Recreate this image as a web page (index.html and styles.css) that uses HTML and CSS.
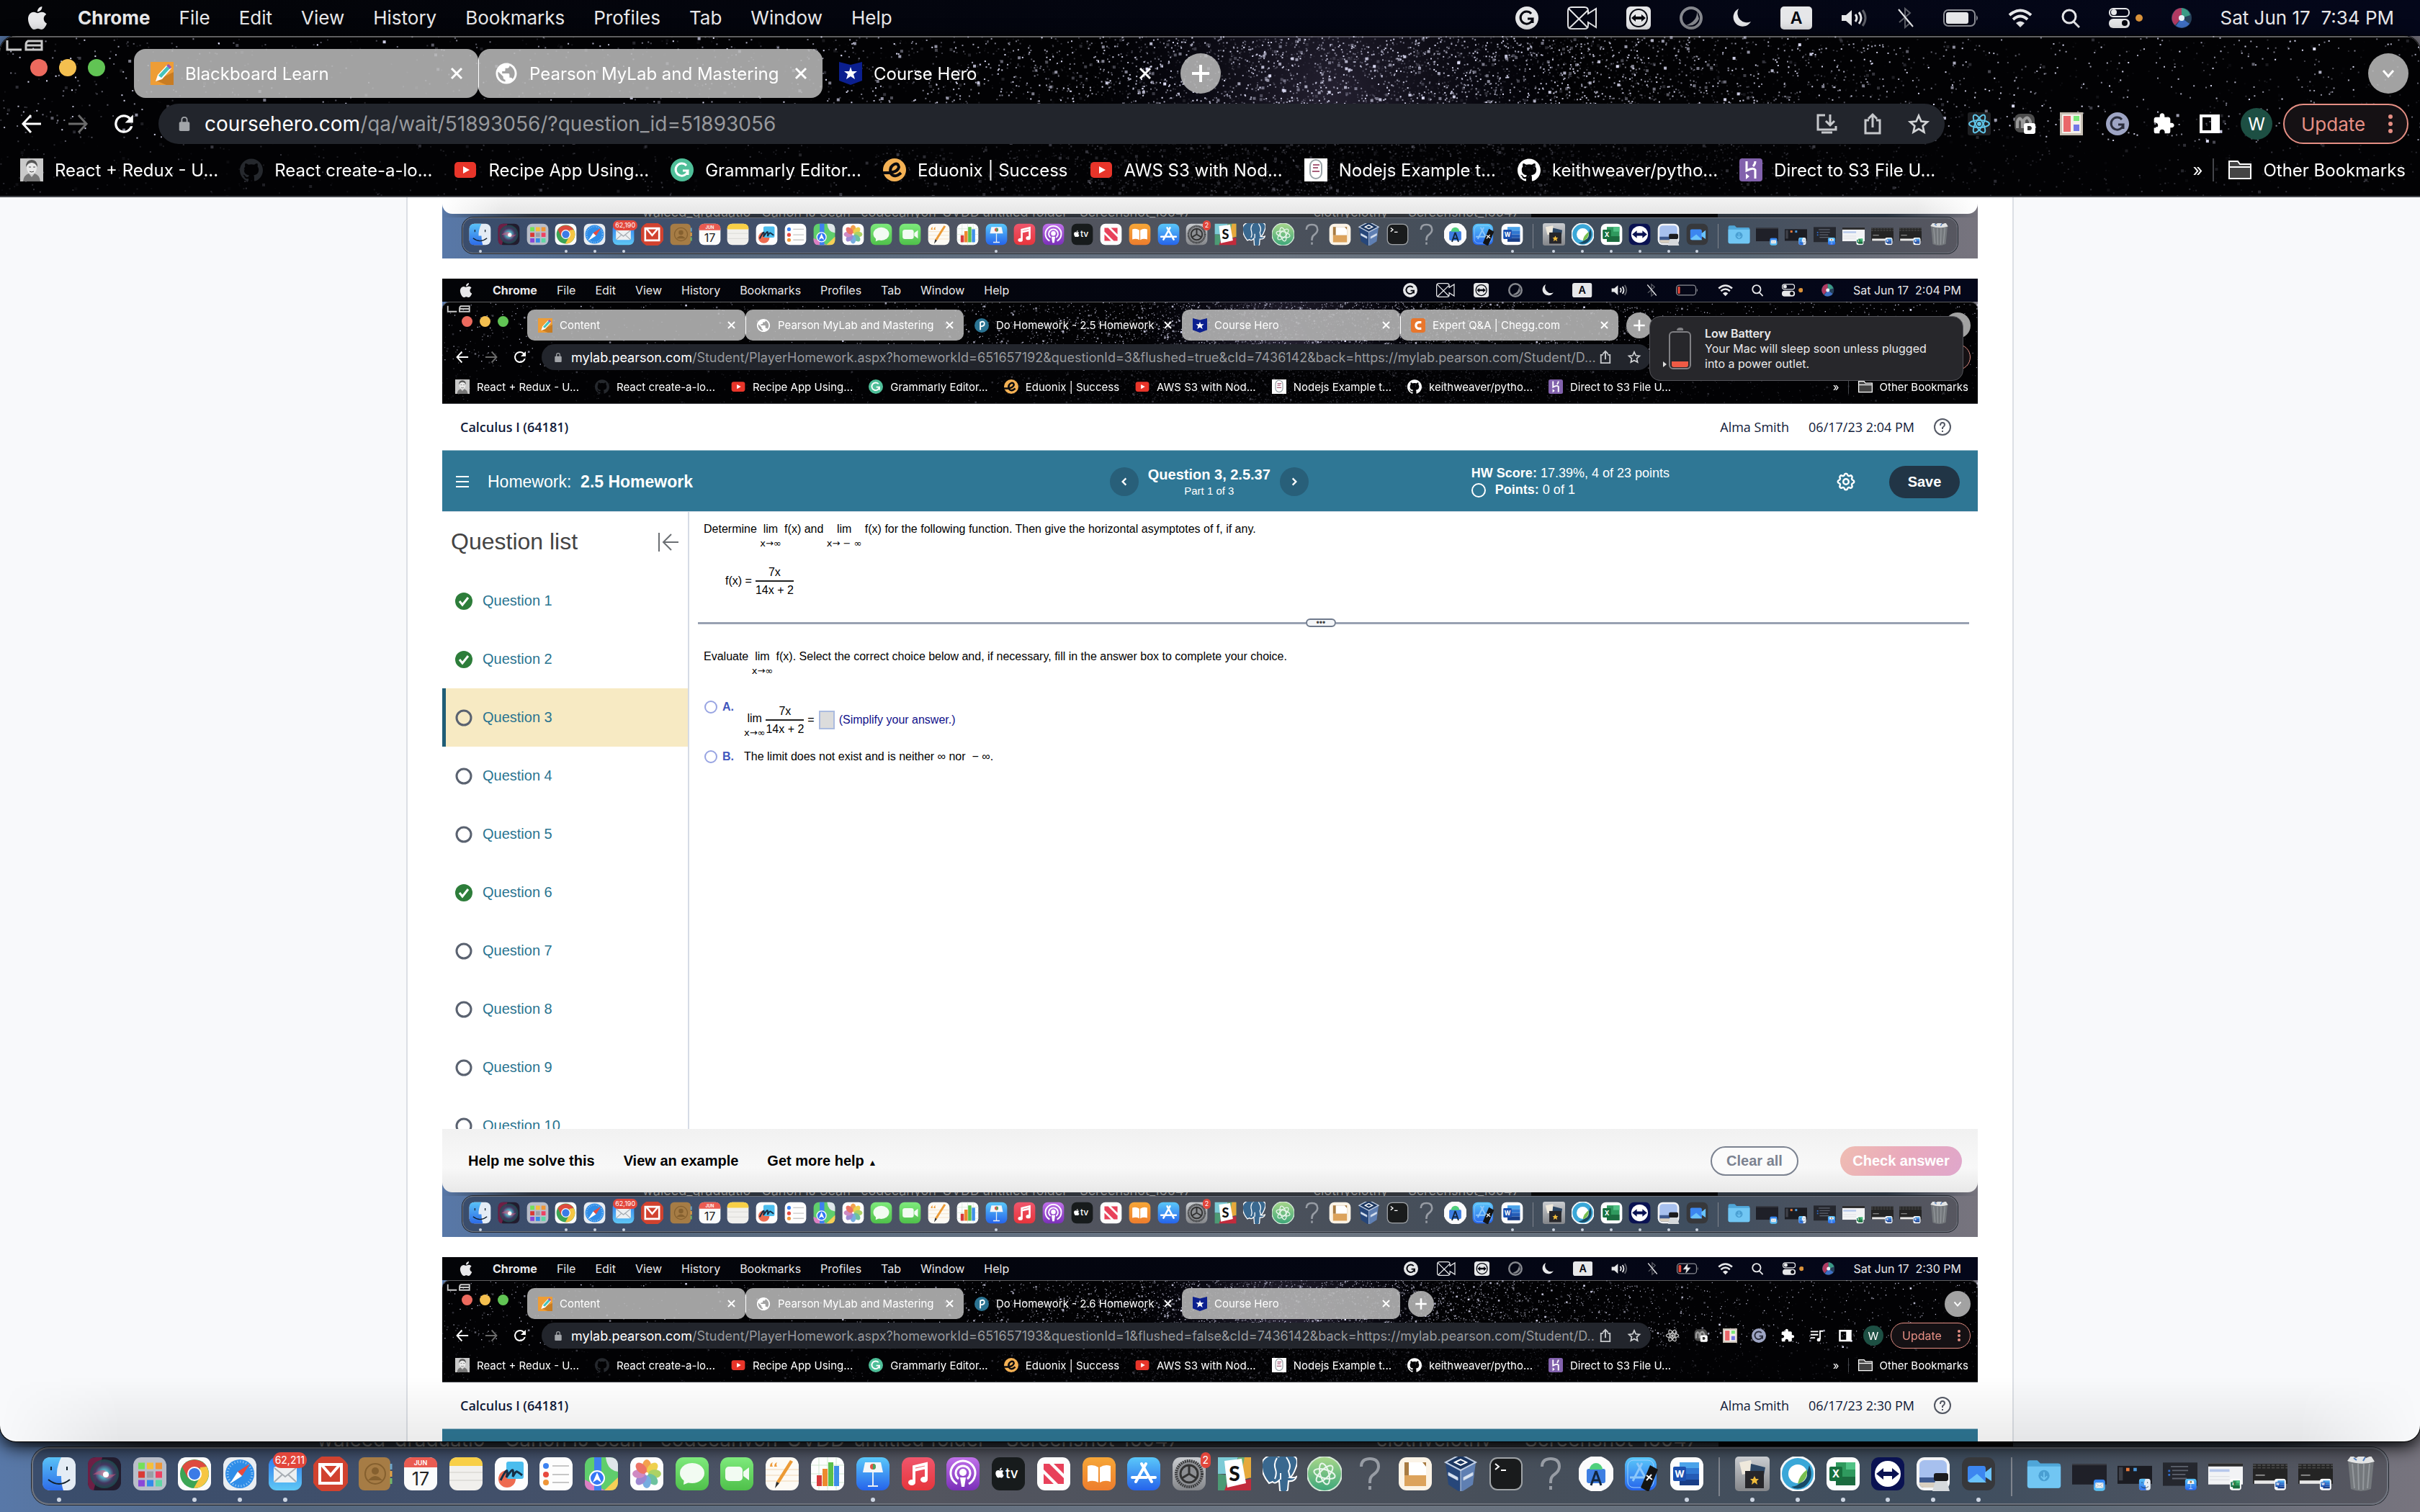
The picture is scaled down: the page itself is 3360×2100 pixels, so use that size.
FILE: index.html
```html
<!DOCTYPE html>
<html lang="en">
  <head>
    <meta charset="UTF-8" />
    <meta name="viewport" content="width=device-width, initial-scale=1.0" />
    <title>Course Hero</title>
    <link rel="stylesheet" href="styles.css" />
  </head>
  <body>
    <!-- Icon sprite -->
    <svg class="sprite" aria-hidden="true">
      <defs>
        <linearGradient id="g-blue" x1="0" y1="0" x2="0" y2="1"><stop offset="0" stop-color="#5ac8fa" /><stop offset="1" stop-color="#2563eb" /></linearGradient>
        <linearGradient id="g-mail" x1="0" y1="0" x2="0" y2="1"><stop offset="0" stop-color="#2f7cf0" /><stop offset="1" stop-color="#5fc8f5" /></linearGradient>
        <linearGradient id="g-green" x1="0" y1="0" x2="0" y2="1"><stop offset="0" stop-color="#7eea7c" /><stop offset="1" stop-color="#4fc04a" /></linearGradient>
        <linearGradient id="g-red" x1="0" y1="0" x2="0" y2="1"><stop offset="0" stop-color="#f0566c" /><stop offset="1" stop-color="#e6353c" /></linearGradient>
        <linearGradient id="g-purple" x1="0" y1="0" x2="0" y2="1"><stop offset="0" stop-color="#c071ea" /><stop offset="1" stop-color="#7a2fb8" /></linearGradient>
        <linearGradient id="g-orange" x1="0" y1="0" x2="0" y2="1"><stop offset="0" stop-color="#f6a637" /><stop offset="1" stop-color="#ee7d2d" /></linearGradient>
        <linearGradient id="g-grey" x1="0" y1="0" x2="0" y2="1"><stop offset="0" stop-color="#c9ccd0" /><stop offset="1" stop-color="#84868a" /></linearGradient>
        <linearGradient id="g-atom" x1="0" y1="0" x2="0" y2="1"><stop offset="0" stop-color="#a6d68a" /><stop offset="1" stop-color="#3fa77a" /></linearGradient>
        <linearGradient id="g-face" x1="0" y1="0" x2="0" y2="1"><stop offset="0" stop-color="#59c2f7" /><stop offset="1" stop-color="#2d6be8" /></linearGradient>
        <radialGradient id="g-siri"><stop offset="0" stop-color="#ffffff" /><stop offset=".3" stop-color="#5bc3d8" /><stop offset=".65" stop-color="#4a3a68" /><stop offset="1" stop-color="#1b4f50" /></radialGradient>
      </defs>

      <!-- menu bar -->
      <symbol id="apple" viewBox="0 0 24 24"><path fill="currentColor" d="M12.152 6.896c-.948 0-2.415-1.078-3.96-1.04-2.04.027-3.91 1.183-4.961 3.014-2.117 3.675-.546 9.103 1.519 12.09 1.013 1.454 2.208 3.09 3.792 3.039 1.52-.065 2.09-.987 3.935-.987 1.831 0 2.35.987 3.96.948 1.637-.026 2.676-1.48 3.676-2.948 1.156-1.688 1.636-3.325 1.662-3.415-.039-.013-3.182-1.221-3.22-4.857-.026-3.04 2.48-4.494 2.597-4.559-1.429-2.09-3.623-2.324-4.39-2.376-2-.156-3.675 1.09-4.61 1.09zM15.53 3.83c.843-1.012 1.4-2.427 1.245-3.83-1.207.052-2.662.805-3.532 1.818-.78.896-1.454 2.338-1.273 3.714 1.338.104 2.715-.688 3.559-1.701" /></symbol>
      <symbol id="st-grammarly" viewBox="0 0 32 32"><circle cx="16" cy="16" r="16" fill="#e6e7e9" /><path d="M22 10a8.500 8.500 0 1 0 2 7h-7M24 17v6" fill="none" stroke="#05070f" stroke-width="3" /></symbol>
      <symbol id="st-camera" viewBox="0 0 42 32"><path d="M6 1h18q5 0 5 5v4l11-7v26l-11-7v4q0 5-5 5H6q-5 0-5-5V6q0-5 5-5zM2 3l27 27M29 5L3 30" fill="none" stroke="#e6e7e9" stroke-width="2" /></symbol>
      <symbol id="st-viewer" viewBox="0 0 34 32"><rect width="34" height="32" rx="6" fill="#e6e7e9" /><circle cx="17" cy="16" r="13" fill="#05070f" /><circle cx="17" cy="16" r="11" fill="#e6e7e9" /><path d="M7 16l6-5v3h8v-3l6 5-6 5v-3h-8v3z" fill="#05070f" /></symbol>
      <symbol id="st-ring" viewBox="0 0 32 32"><circle cx="16" cy="16" r="14" fill="none" stroke="#85878d" stroke-width="4" /><path d="M24 7Q25 20 9 26q13 3 18-9" fill="#85878d" /></symbol>
      <symbol id="st-moon" viewBox="0 0 28 32"><path d="M10 3a13 13 0 1 0 17 18A13 13 0 0 1 10 3z" fill="#e6e7e9" /></symbol>
      <symbol id="st-keyboard" viewBox="0 0 44 32"><rect width="44" height="32" rx="5" fill="#e6e7e9" /><text x="22" y="24" text-anchor="middle" font-family="Inter, sans-serif" font-weight="600" font-size="23" fill="#05070f">A</text></symbol>
      <symbol id="st-volume" viewBox="0 0 38 32"><path d="M1 12h6l8-7v22l-8-7H1z" fill="#e6e7e9" /><path d="M20 11q4 5 0 10M25 8q6 8 0 16" fill="none" stroke="#e6e7e9" stroke-width="3" /><path d="M30 5q8 11 0 22" fill="none" stroke="#5c5e66" stroke-width="3" /></symbol>
      <symbol id="st-bluetooth" viewBox="0 0 24 32"><path d="M3 22L18 9l-7-6v26l7-6-5-4" fill="none" stroke="#5c5e66" stroke-width="2" /><path d="M2 4l20 24" stroke="#e6e7e9" stroke-width="2" /></symbol>
      <symbol id="st-battery" viewBox="0 0 50 32"><rect x="1" y="5" width="43" height="22" rx="6" fill="none" stroke="#8b8d94" stroke-width="2" /><rect x="4" y="8" width="31" height="16" rx="3" fill="#e6e7e9" /><path d="M46 12q4 4 0 8z" fill="#8b8d94" /></symbol>
      <symbol id="st-battery-low" viewBox="0 0 50 32"><rect x="1" y="5" width="43" height="22" rx="6" fill="none" stroke="#8b8d94" stroke-width="2" /><rect x="4" y="8" width="5" height="16" rx="2" fill="#ea4b3c" /><path d="M46 12q4 4 0 8z" fill="#8b8d94" /></symbol>
      <symbol id="st-battery-charging" viewBox="0 0 50 32"><rect x="1" y="5" width="43" height="22" rx="6" fill="none" stroke="#8b8d94" stroke-width="2" /><rect x="4" y="8" width="6" height="16" rx="2" fill="#ea4b3c" /><path d="M46 12q4 4 0 8zM26 2L13 18h8l-3 12 14-17h-8z" fill="#e6e7e9" stroke="#05070f" /></symbol>
      <symbol id="st-wifi" viewBox="0 0 34 32"><path d="M2 12q15-13 30 0M7 18q10-9 20 0" fill="none" stroke="#e6e7e9" stroke-width="4" /><path d="M11 23q6-5 12 0l-6 6z" fill="#e6e7e9" /></symbol>
      <symbol id="st-search" viewBox="0 0 26 32"><circle cx="11" cy="14" r="9" fill="none" stroke="#e6e7e9" stroke-width="3" /><path d="M17 21l8 8" stroke="#e6e7e9" stroke-width="3" /></symbol>
      <symbol id="st-control" viewBox="0 0 47 32"><rect x="1" y="3" width="27" height="11" rx="5" fill="none" stroke="#e6e7e9" stroke-width="2" /><circle cx="7" cy="8" r="4" fill="#e6e7e9" /><rect y="17" width="29" height="13" rx="6" fill="#e6e7e9" /><circle cx="22" cy="23" r="4" fill="#05070f" /><circle cx="42" cy="16" r="5" fill="#d9923a" /></symbol>
      <symbol id="st-siri" viewBox="0 0 28 32"><circle cx="14" cy="16" r="14" fill="#27425c" /><path d="M14 2a14 14 0 0 0-9 24l9-10z" fill="#b03a62" /><path d="M14 2a14 14 0 0 1 12 10l-12 4z" fill="#3b9a86" /><path d="M6 27a14 14 0 0 0 19-3L14 16z" fill="#3f6fc4" /><circle cx="14" cy="16" r="4" fill="#eaf4fa" /></symbol>

      <!-- browser -->
      <symbol id="lb" viewBox="0 0 56 16"><path d="M2 1v13h20M28 8h22M30 2h20v12H28V8q0-6 4-6" fill="none" stroke="#c9c9c9" stroke-width="3" /></symbol>
      <symbol id="close" viewBox="0 0 20 20"><path d="M3 3l14 14M17 3L3 17" stroke="#fff" stroke-width="3" /></symbol>
      <symbol id="plus" viewBox="0 0 28 28"><path d="M14 2v24M2 14h24" stroke="#fff" stroke-width="4" /></symbol>
      <symbol id="chevron" viewBox="0 0 28 28"><path d="M7 10l7 8 7-8" fill="none" stroke="#fff" stroke-width="3" /></symbol>
      <symbol id="back" viewBox="0 0 32 32"><path d="M29 16H4M15 4L4 16l11 12" fill="none" stroke="#fff" stroke-width="3" /></symbol>
      <symbol id="forward" viewBox="0 0 32 32"><path d="M3 16h25M17 4l11 12-11 12" fill="none" stroke="#6b6b6b" stroke-width="3" /></symbol>
      <symbol id="reload" viewBox="2 2 20 20"><path fill="#fff" d="M17.650 6.350A7.960 7.960 0 0 0 12 4a8 8 0 1 0 7.730 10h-2.080A6 6 0 1 1 12 6c1.660 0 3.140.69 4.220 1.780L13 11h7V4z" /></symbol>
      <symbol id="lock" viewBox="0 0 16 22"><path d="M4 9V5q0-4 4-4t4 4v4" fill="none" stroke="#a2a5a9" stroke-width="2" /><rect y="8" width="16" height="14" rx="2" fill="#a2a5a9" /></symbol>
      <symbol id="install" viewBox="0 0 32 32"><path d="M14 4H4v20h25v-5M21 3v15M15 12l6 6 6-6M9 28h15" fill="none" stroke="#c6c8cb" stroke-width="3" /></symbol>
      <symbol id="share" viewBox="0 0 32 32"><path d="M11 11H6v18h20V11h-5M16 21V3M10 9l6-6 6 6" fill="none" stroke="#c6c8cb" stroke-width="3" /></symbol>
      <symbol id="star" viewBox="0 0 24 24"><path d="M12 3.500l2.600 5.900 6.400.6-4.800 4.300 1.400 6.300L12 17.300l-5.600 3.300 1.400-6.300L3 10l6.400-.6z" fill="none" stroke="#d2d4d6" stroke-width="2" /></symbol>
      <symbol id="react" viewBox="0 0 32 32"><rect width="32" height="32" rx="3" fill="#1f2023" /><g fill="none" stroke="#61c5e8" stroke-width="2"><ellipse cx="16" cy="16" rx="14" ry="5" /><ellipse cx="16" cy="16" rx="14" ry="5" transform="rotate(60 16 16)" /><ellipse cx="16" cy="16" rx="14" ry="5" transform="rotate(120 16 16)" /></g><circle cx="16" cy="16" r="3" fill="#61c5e8" /></symbol>
      <symbol id="react-off" viewBox="0 0 32 32"><g fill="none" stroke="#c9c9c9" stroke-width="2"><ellipse cx="16" cy="16" rx="14" ry="5" /><ellipse cx="16" cy="16" rx="14" ry="5" transform="rotate(60 16 16)" /><ellipse cx="16" cy="16" rx="14" ry="5" transform="rotate(120 16 16)" /></g><circle cx="16" cy="16" r="3" fill="#c9c9c9" /></symbol>
      <symbol id="ext-loop" viewBox="0 0 32 32"><rect x="1" y="2" width="28" height="26" rx="8" fill="#4c4c4c" /><path d="M5 22V13q3-9 7 0v9M14 20v-9q5-8 9 2v6" fill="none" stroke="#9b9b9b" stroke-width="4" /><rect x="14" y="15" width="16" height="15" rx="3" fill="#fff" /><path d="M19 19h4q4 3 0 6h-4z" fill="#333" /></symbol>
      <symbol id="ext-layout" viewBox="0 0 32 32"><rect width="32" height="32" fill="#c7bfb4" /><rect x="3" y="3" width="26" height="26" fill="#f4f0ea" /><rect x="5" y="5" width="10" height="22" fill="#e9676a" /><rect x="19" y="5" width="8" height="7" fill="#79e879" /><rect x="19" y="17" width="8" height="9" fill="#7276e6" /></symbol>
      <symbol id="ext-g" viewBox="0 0 32 32"><circle cx="16" cy="16" r="16" fill="#9ea5c4" /><path d="M22 10a8.500 8.500 0 1 0 2 7h-7M24 17v6" fill="none" stroke="#2a2d3c" stroke-width="3" /></symbol>
      <symbol id="puzzle" viewBox="0 0 24 24"><path fill="#fff" d="M20.500 11H19V7c0-1.100-.9-2-2-2h-4V3.500C13 2.120 11.880 1 10.500 1S8 2.120 8 3.500V5H4c-1.100 0-1.990.9-1.990 2v3.800H3.500c1.490 0 2.700 1.210 2.700 2.700s-1.210 2.700-2.700 2.700H2V20c0 1.100.9 2 2 2h3.800v-1.500c0-1.490 1.210-2.700 2.700-2.700s2.700 1.210 2.700 2.700V22H17c1.100 0 2-.9 2-2v-4h1.500c1.380 0 2.500-1.120 2.500-2.500S21.880 11 20.500 11z" /></symbol>
      <symbol id="playlist" viewBox="0 0 32 32"><path d="M3 7h17M3 14h17M3 21h10M24 24V6h7" fill="none" stroke="#fff" stroke-width="3" /><circle cx="21" cy="25" r="4" fill="#fff" /></symbol>
      <symbol id="sidepanel" viewBox="0 0 32 32"><path d="M2 3h28v26H2zM6 7v18h12V7z" fill="#fff" fill-rule="evenodd" /></symbol>

      <!-- favicons -->
      <symbol id="fav-pencil" viewBox="0 0 32 32"><rect width="32" height="32" fill="#ee9d36" /><path d="M8 26l14 6h10V14z" fill="#c87c22" /><path d="M7 27l3-9L23 4l6 5-13 15z" fill="#fff" /><path d="M11 19L23 6l4 3-12 13z" fill="#46c3bb" /><path d="M22 5l3-2 4 4-2 3z" fill="#9356b8" /></symbol>
      <symbol id="fav-globe" viewBox="1 1 22 22"><path fill="#fff" d="M12 2C6.480 2 2 6.480 2 12s4.480 10 10 10 10-4.480 10-10S17.520 2 12 2zm-1 17.930c-3.950-.49-7-3.850-7-7.930 0-.62.08-1.210.21-1.790L9 15v1c0 1.100.9 2 2 2v1.930zm6.900-2.540c-.26-.81-1-1.390-1.900-1.390h-1v-3c0-.55-.45-1-1-1H8v-2h2c.55 0 1-.45 1-1V7h2c1.100 0 2-.9 2-2v-.41c2.930 1.190 5 4.060 5 7.410 0 2.080-.8 3.970-2.100 5.390z" /></symbol>
      <symbol id="fav-hero" viewBox="0 0 32 32"><path d="M0 0l16 4L32 0v26l-16 6-16-6z" fill="#0b1f8f" /><path d="M16 7l2 6h7l-5 4 2 7-6-4-6 4 2-7-5-4h7z" fill="#fff" /></symbol>
      <symbol id="fav-pearson" viewBox="0 0 32 32"><circle cx="16" cy="16" r="16" fill="#2b7392" /><path d="M13 26V9q9-4 9 3 0 6-9 6" fill="none" stroke="#fff" stroke-width="3" /></symbol>
      <symbol id="fav-chegg" viewBox="0 0 32 32"><rect width="32" height="32" rx="6" fill="#e8762c" /><path d="M23 9h-6q-6 1-6 7t6 7h6" fill="none" stroke="#fff" stroke-width="5" /></symbol>
      <symbol id="bm-photo" viewBox="0 0 32 32"><rect width="32" height="32" fill="#c9c9c9" /><path d="M4 32q1-9 8-11l4 5 4-5q7 2 8 11z" fill="#777" /><ellipse cx="16" cy="13" rx="7" ry="9" fill="#e9e9e9" /><path d="M8 12q0-10 8-10t8 10q-3-6-8-6t-8 6z" fill="#555" /><path d="M12 12h3M18 12h3M13 18q3 2 6 0" stroke="#444" stroke-width="1" fill="none" /></symbol>
      <symbol id="bm-github" viewBox="0 0 24 24"><path fill="currentColor" d="M12 .297c-6.630 0-12 5.373-12 12 0 5.303 3.438 9.800 8.205 11.385.6.113.82-.258.82-.577 0-.285-.01-1.040-.015-2.040-3.338.724-4.042-1.610-4.042-1.610C4.422 18.070 3.633 17.700 3.633 17.700c-1.087-.744.084-.729.084-.729 1.205.084 1.838 1.236 1.838 1.236 1.070 1.835 2.809 1.305 3.495.998.108-.776.417-1.305.76-1.605-2.665-.3-5.466-1.332-5.466-5.930 0-1.310.465-2.380 1.235-3.220-.135-.303-.54-1.523.105-3.176 0 0 1.005-.322 3.300 1.230.96-.267 1.980-.399 3-.405 1.020.006 2.040.138 3 .405 2.280-1.552 3.285-1.230 3.285-1.230.645 1.653.24 2.873.12 3.176.765.84 1.230 1.910 1.230 3.220 0 4.610-2.805 5.625-5.475 5.920.42.36.81 1.096.81 2.220 0 1.606-.015 2.896-.015 3.286 0 .315.21.69.825.57C20.565 22.092 24 17.592 24 12.297c0-6.627-5.373-12-12-12" /></symbol>
      <symbol id="bm-youtube" viewBox="0 0 32 32"><rect x="1" y="5" width="30" height="22" rx="5" fill="#e8352a" /><path d="M13 11l9 5-9 5z" fill="#fff" /></symbol>
      <symbol id="bm-grammarly" viewBox="0 0 32 32"><circle cx="16" cy="16" r="16" fill="#4fbf99" /><path d="M22 10a8.500 8.500 0 1 0 2 7h-7M24 17v6" fill="none" stroke="#fff" stroke-width="3" /></symbol>
      <symbol id="bm-eduonix" viewBox="0 0 32 32"><circle cx="16" cy="16" r="16" fill="#f4b154" /><path d="M0 20q20 1 22-8-1-6-6-4-8 4-5 13 5 7 14-1" fill="none" stroke="#0b0b0f" stroke-width="4" /></symbol>
      <symbol id="bm-node" viewBox="0 0 32 32"><rect width="32" height="32" fill="#fff" /><rect x="8" y="2" width="16" height="26" rx="8" fill="none" stroke="#9aa3a8" stroke-width="2" /><path d="M12 9h9M12 13h7M11 18h10" stroke="#a8607c" stroke-width="2" /></symbol>
      <symbol id="bm-heroku" viewBox="0 0 32 32"><rect width="32" height="32" rx="4" fill="#8262ad" /><path d="M10 4v13q10-5 12-1v12M22 4q0 4-3 7" fill="none" stroke="#fff" stroke-width="3" /><path d="M9 21l5 4-5 4z" fill="#fff" /></symbol>
      <symbol id="bm-folder" viewBox="0 0 32 32"><path d="M1 4h12l3 4h15v20H1z" fill="#444" stroke="#fff" stroke-width="2" /><path d="M2 12h28" stroke="#fff" stroke-width="2" /></symbol>

      <!-- dock -->
      <symbol id="d-finder" viewBox="0 0 48 48"><rect x="1" y="1" width="46" height="46" rx="11" fill="#e4ecf5" /><path d="M12 1h15q-7 14-6 26h6q0 12 3 20H12Q1 47 1 36V12Q1 1 12 1z" fill="url(#g-face)" /><path d="M13 14v5M35 14v5M9 32q15 12 30 0" fill="none" stroke="#12202c" stroke-width="2" /></symbol>
      <symbol id="d-siri" viewBox="0 0 48 48"><rect x="1" y="1" width="46" height="46" rx="11" fill="#221c2e" /><path d="M12 1h9L9 47Q1 46 1 36V12Q1 1 12 1z" fill="#6d1f45" /><circle cx="24" cy="24" r="20" fill="url(#g-siri)" opacity=".85" /><path d="M8 25q14-10 18-4t14 3q-10 10-16 5T8 25z" fill="#c9567f" opacity=".6" /><circle cx="26" cy="25" r="4" fill="#fff" /></symbol>
      <symbol id="d-launchpad" viewBox="0 0 48 48"><rect x="1" y="1" width="46" height="46" rx="11" fill="#b9bec9" /><g stroke-width="9"><path d="M8 13h9" stroke="#74e05a" /><path d="M20 13h9" stroke="#f5be3b" /><path d="M32 13h9" stroke="#ef9637" /><path d="M8 25h9" stroke="#d93a34" /><path d="M20 25h9" stroke="#9b9ea5" /><path d="M32 25h9" stroke="#ee4263" /><path d="M8 37h9" stroke="#8a47d8" /><path d="M20 37h9" stroke="#338be8" /><path d="M32 37h9" stroke="#5fd6a4" /></g></symbol>
      <symbol id="d-chrome" viewBox="0 0 48 48"><rect x="1" y="1" width="46" height="46" rx="11" fill="#fbfbfb" /><circle cx="24" cy="24" r="20" fill="#3ca555" /><path d="M7 14a20 20 0 0 1 34 0l-17 4-9 12z" fill="#dd4b3e" /><path d="M41 14a20 20 0 0 1-18 30l9-16V15z" fill="#f6c643" /><circle cx="24" cy="24" r="10" fill="#fff" /><circle cx="24" cy="24" r="8" fill="#3b7be6" /></symbol>
      <symbol id="d-safari" viewBox="0 0 48 48"><rect x="1" y="1" width="46" height="46" rx="11" fill="#e9edf1" /><circle cx="24" cy="24" r="20" fill="#2f8de8" /><circle cx="24" cy="24" r="17" fill="none" stroke="#a9d3f7" stroke-dasharray="1 3" stroke-width="3" /><path d="M38 10L27 27l-6-6z" fill="#ea4a3d" /><path d="M10 38l11-17 6 6z" fill="#fff" /></symbol>
      <symbol id="d-mail" viewBox="0 0 48 48"><rect x="1" y="1" width="46" height="46" rx="11" fill="url(#g-mail)" /><rect x="8" y="14" width="32" height="22" rx="3" fill="#edf0f2" /><path d="M9 16l15 12 15-12M9 35l11-10M39 35L28 25" fill="none" stroke="#a7adb3" stroke-width="2" /></symbol>
      <symbol id="d-gmail" viewBox="0 0 48 48"><circle cx="24" cy="24" r="27" fill="#d1422f" /><path d="M9 11h30v26H9zM12 12l12 14 12-14" fill="none" stroke="#fff" stroke-width="4" /></symbol>
      <symbol id="d-contacts" viewBox="0 0 48 48"><rect x="1" y="1" width="44" height="46" rx="8" fill="#a67c45" /><circle cx="24" cy="24" r="14" fill="none" stroke="#85602f" stroke-width="2" /><circle cx="24" cy="20" r="5" fill="#85602f" /><path d="M14 33q10-12 20 0z" fill="#85602f" /><path d="M46 10v8" stroke="#6ea6c9" stroke-width="3" /><path d="M46 20v8" stroke="#e3a346" stroke-width="3" /><path d="M46 30v8" stroke="#73b86a" stroke-width="3" /></symbol>
      <symbol id="d-calendar" viewBox="0 0 48 48"><rect x="1" y="1" width="46" height="46" rx="11" fill="#fbfbfb" /><path d="M12 1h24q11 0 11 11v3H1v-3Q1 1 12 1z" fill="#ea5b51" /><text x="24" y="12" text-anchor="middle" font-family="Inter, sans-serif" font-weight="600" font-size="9" fill="#fff">JUN</text><text x="24" y="40" text-anchor="middle" font-family="Inter, sans-serif" font-size="25" fill="#222">17</text></symbol>
      <symbol id="d-notes" viewBox="0 0 48 48"><rect x="1" y="1" width="46" height="46" rx="11" fill="#f1f0ed" /><path d="M12 1h24q11 0 11 11v1H1v-1Q1 1 12 1z" fill="#f8cf46" /><path d="M1 22h46M1 33h46" stroke="#cfcdc8" stroke-width="1" /></symbol>
      <symbol id="d-freeform" viewBox="0 0 48 48"><rect x="1" y="1" width="46" height="46" rx="11" fill="#fdfdfd" /><circle cx="18" cy="31" r="12" fill="#ee6b50" /><rect x="17" y="7" width="24" height="24" rx="3" fill="#4bbdee" /><path d="M9 33q8-16 9-13t-1 9q8-12 9-10t0 9q4-8 6-7t7 5" fill="none" stroke="#172e45" stroke-width="3" /></symbol>
      <symbol id="d-reminders" viewBox="0 0 48 48"><rect x="1" y="1" width="46" height="46" rx="11" fill="#fdfdfd" /><circle cx="10" cy="13" r="4" fill="#3c82f0" /><circle cx="10" cy="25" r="4" fill="#e8493f" /><circle cx="10" cy="36" r="4" fill="#ef9639" /><path d="M19 13h23M19 25h23M19 36h23" stroke="#c7c7c7" stroke-width="2" /></symbol>
      <symbol id="d-maps" viewBox="0 0 48 48"><rect x="1" y="1" width="46" height="46" rx="11" fill="#5fce6c" /><path d="M30 1q2 18 17 20V11Q46 1 36 1z" fill="#dfe6ea" /><path d="M1 32l28 15H12Q1 47 1 36z" fill="#dd7fc4" /><path d="M28 47l19-18v8q-1 10-11 10z" fill="#f6cf56" /><path d="M14 1h10v46H14z" fill="#3f80ef" /><circle cx="18" cy="30" r="10" fill="#3478f6" stroke="#fff" stroke-width="2" /><path d="M18 22l6 14-6-4-6 4z" fill="#fff" /></symbol>
      <symbol id="d-photos" viewBox="0 0 48 48"><rect x="1" y="1" width="46" height="46" rx="11" fill="#fdfdfd" /><g opacity=".85"><ellipse cx="24" cy="13" rx="6" ry="9" fill="#f2912f" /><ellipse cx="24" cy="13" rx="6" ry="9" fill="#ecc92f" transform="rotate(45 24 24)" /><ellipse cx="24" cy="13" rx="6" ry="9" fill="#9fcb4b" transform="rotate(90 24 24)" /><ellipse cx="24" cy="13" rx="6" ry="9" fill="#54b88e" transform="rotate(135 24 24)" /><ellipse cx="24" cy="13" rx="6" ry="9" fill="#5fa0dc" transform="rotate(180 24 24)" /><ellipse cx="24" cy="13" rx="6" ry="9" fill="#8d73c9" transform="rotate(225 24 24)" /><ellipse cx="24" cy="13" rx="6" ry="9" fill="#c775b8" transform="rotate(270 24 24)" /><ellipse cx="24" cy="13" rx="6" ry="9" fill="#ea5c4c" transform="rotate(315 24 24)" /></g></symbol>
      <symbol id="d-messages" viewBox="0 0 48 48"><rect x="1" y="1" width="46" height="46" rx="11" fill="url(#g-green)" /><ellipse cx="24" cy="23" rx="17" ry="14" fill="#f2fbf2" /><path d="M13 30l-1 9 10-4z" fill="#f2fbf2" /></symbol>
      <symbol id="d-facetime" viewBox="0 0 48 48"><rect x="1" y="1" width="46" height="46" rx="11" fill="url(#g-green)" /><rect x="8" y="14" width="24" height="20" rx="5" fill="#f2fbf2" /><path d="M33 21l8-6v18l-8-6z" fill="#f2fbf2" /></symbol>
      <symbol id="d-pages" viewBox="0 0 48 48"><rect x="1" y="1" width="46" height="46" rx="11" fill="#fdfaf4" /><path d="M1 18h46M1 26h46M1 34h46" stroke="#f0d7b4" stroke-width="1" /><path d="M7 14q0-5 4-6-2 3 0 6zM13 14q0-5 4-6-2 3 0 6z" fill="#ee9c3b" /><path d="M35 5l4 2-19 30-4-2z" fill="#ec9a35" /><path d="M16 35l4 2-6 7z" fill="#2b2b2b" /></symbol>
      <symbol id="d-numbers" viewBox="0 0 48 48"><rect x="1" y="1" width="46" height="46" rx="11" fill="#fdfdfd" /><path d="M1 12h46M1 24h46M1 36h46M12 1v46M24 1v46M36 1v46" stroke="#cfe7cf" stroke-width="1" /><path d="M9 26h7v15H9z" fill="#d8393b" /><path d="M17 17h7v24h-7z" fill="#ee8a2e" /><path d="M25 8h7v33h-7z" fill="#5cc04a" /><path d="M33 13h7v28h-7z" fill="#3e8fe8" /></symbol>
      <symbol id="d-keynote" viewBox="0 0 48 48"><rect x="1" y="1" width="46" height="46" rx="11" fill="url(#g-blue)" /><path d="M13 8h22l3 14H10z" fill="#f4f6f8" /><circle cx="24" cy="14" r="4" fill="#e1574a" /><path d="M24 10a4 4 0 0 1 0 8z" fill="#4aa562" /><path d="M24 22v18M17 41h14" stroke="#e9eef4" stroke-width="2" /></symbol>
      <symbol id="d-music" viewBox="0 0 48 48"><rect x="1" y="1" width="46" height="46" rx="11" fill="url(#g-red)" /><path d="M18 35V14l17-4v21M18 19l17-4" fill="none" stroke="#fff" stroke-width="4" /><ellipse cx="15" cy="36" rx="5" ry="4" fill="#fff" /><ellipse cx="32" cy="32" rx="5" ry="4" fill="#fff" /></symbol>
      <symbol id="d-podcasts" viewBox="0 0 48 48"><rect x="1" y="1" width="46" height="46" rx="11" fill="url(#g-purple)" /><path d="M16 38a17 17 0 1 1 16 0M18 31a10 10 0 1 1 12 0" fill="none" stroke="#fff" stroke-width="3" /><circle cx="24" cy="22" r="5" fill="#fff" /><path d="M20 29h8l-2 13h-4z" fill="#fff" /></symbol>
      <symbol id="d-tv" viewBox="0 0 48 48"><rect x="1" y="1" width="46" height="46" rx="11" fill="#171b1c" /><use href="#apple" x="5" y="15" width="14" height="15" color="#fff" /><text x="20" y="30" font-family="Inter, sans-serif" font-weight="500" font-size="19" fill="#fff">tv</text></symbol>
      <symbol id="d-news" viewBox="0 0 48 48"><rect x="1" y="1" width="46" height="46" rx="11" fill="#fdfdfd" /><path d="M10 10h8l20 20v8h-8L10 18z" fill="#e8415a" /><path d="M10 24l14 14H10zM24 10h14v14z" fill="#e8415a" /></symbol>
      <symbol id="d-books" viewBox="0 0 48 48"><rect x="1" y="1" width="46" height="46" rx="11" fill="url(#g-orange)" /><path d="M23 15q-7-5-15-2v22q8-3 15 1zM25 15q7-5 15-2v22q-8-3-15 1z" fill="#fff" /></symbol>
      <symbol id="d-appstore" viewBox="0 0 48 48"><rect x="1" y="1" width="46" height="46" rx="11" fill="url(#g-blue)" /><path d="M27 10L13 35M21 10l14 25M8 29h20M34 29h6" fill="none" stroke="#fff" stroke-width="4" stroke-linecap="round" /></symbol>
      <symbol id="d-settings" viewBox="0 0 48 48"><rect x="1" y="1" width="46" height="46" rx="11" fill="url(#g-grey)" /><circle cx="24" cy="24" r="18" fill="#8d8f93" stroke="#3a3b3d" stroke-width="4" stroke-dasharray="2 1" /><circle cx="24" cy="24" r="12" fill="none" stroke="#333" stroke-width="3" /><path d="M24 24V12M24 24l10 6M24 24l-10 6" stroke="#333" stroke-width="3" /></symbol>
      <symbol id="d-slack" viewBox="0 0 48 48"><path d="M1 1h28L18 24H1z" fill="#7ccbd6" /><path d="M29 1h18v29L24 20z" fill="#6cae75" /><path d="M38 1h9v28l-15 4z" fill="#e6a93b" /><path d="M1 24l14 2-4 21H1z" fill="#4c9a74" /><path d="M15 36l32-5v16H10z" fill="#c22b3c" /><path d="M10 6l24-3 6 34-26 6z" fill="#fff" /><text x="24" y="34" text-anchor="middle" font-family="Lato, sans-serif" font-weight="900" font-size="28" fill="#111">S</text></symbol>
      <symbol id="d-postgres" viewBox="0 0 48 48"><path d="M5 1Q14-5 22 0q8-4 18-2 12 3 6 18-4 11-8 13 6 1 9-1-2 7-11 6l-1 12q-5 9-11 1l-1-14q-6 6-9 2l-5 2Q-2 24-1 11q0-6 6-10z" fill="#39688f" stroke="#fff" stroke-width="2" /><path d="M20 2q-5 8-2 16 2 6-1 13M33 1q8 11 3 19l2 9M25 32v-9" fill="none" stroke="#fff" stroke-width="2" /></symbol>
      <symbol id="d-atom" viewBox="0 0 48 48"><circle cx="24" cy="24" r="25" fill="#d7ead9" /><circle cx="24" cy="24" r="23" fill="url(#g-atom)" /><g fill="none" stroke="#e9f6ec" stroke-width="2"><ellipse cx="24" cy="24" rx="15" ry="6" transform="rotate(15 24 24)" /><ellipse cx="24" cy="24" rx="15" ry="6" transform="rotate(75 24 24)" /><ellipse cx="24" cy="24" rx="15" ry="6" transform="rotate(135 24 24)" /></g></symbol>
      <symbol id="d-unknown" viewBox="0 0 48 48"><path d="M12 14Q12 3 24 3t12 11q0 6-7 11-5 3-5 10v2M24 41v5" fill="none" stroke="#979ca4" stroke-width="4" /></symbol>
      <symbol id="d-archive" viewBox="0 0 48 48"><rect x="1" y="1" width="46" height="46" rx="11" fill="#fbf3e6" /><path d="M9 8h30v18H9z" fill="#a87b42" /><path d="M15 8h19l5 6v12H15z" fill="#fff" /><path d="M9 26h30v15H9z" fill="#dca35c" /></symbol>
      <symbol id="d-vbox" viewBox="0 0 48 48"><path d="M3 8l21 11v31L7 39z" fill="#27477a" /><path d="M45 8L24 19v31l17-11z" fill="#5f7fb2" /><path d="M24-3l21 11-21 11L3 8z" fill="#1b3660" stroke="#c3d0e4" stroke-width="2" /><path d="M24 19v31M7 22l13 7v4L7 26zM41 22l-13 7v4l13-7z" fill="#dbe4f1" stroke="#c3d0e4" stroke-width="1" /><path d="M16 8l8-4 8 4-8 4z" fill="none" stroke="#fff" stroke-width="2" /></symbol>
      <symbol id="d-terminal" viewBox="0 0 48 48"><rect x="1" y="1" width="46" height="46" rx="11" fill="#9fa3a6" /><rect x="3" y="3" width="42" height="42" rx="9" fill="#191b1c" /><path d="M9 10l5 4-5 4M17 19h7" fill="none" stroke="#fff" stroke-width="2" /></symbol>
      <symbol id="d-android" viewBox="0 0 48 48"><circle cx="24" cy="24" r="25" fill="#fbfbfb" /><rect x="11" y="17" width="26" height="20" rx="3" fill="#3d7ee2" /><path d="M15 18a9 9 0 0 1 18 0z" fill="#4fd07c" /><path d="M24 20l-7 20M24 20l7 20M19 33h10" fill="none" stroke="#13263f" stroke-width="3" /></symbol>
      <symbol id="d-xcode" viewBox="0 0 48 48"><rect x="1" y="1" width="44" height="46" rx="11" fill="url(#g-blue)" /><rect x="5" y="5" width="36" height="38" rx="8" fill="none" stroke="#9fd0fb" /><path d="M25 9L12 34M18 9l14 25M8 29h26" fill="none" stroke="#8cc7fa" stroke-width="3" /><path d="M36 12l11 6-13 31-11-6z" fill="#131313" /><path d="M31 26l8 6M38 25l-7 8" stroke="#fff" stroke-width="2" /></symbol>
      <symbol id="d-word" viewBox="0 0 48 48"><rect x="1" y="1" width="46" height="46" rx="11" fill="#fdfdfd" /><path d="M14 8h27v8H14z" fill="#4aa3ea" /><path d="M14 16h27v8H14z" fill="#3078d2" /><path d="M14 24h27v8H14z" fill="#245cb6" /><path d="M14 32h27v8H14z" fill="#183d87" /><rect x="5" y="14" width="18" height="20" rx="2" fill="#1c51b0" /><text x="14" y="29" text-anchor="middle" font-family="Inter, sans-serif" font-weight="700" font-size="13" fill="#fff">W</text></symbol>
      <symbol id="d-excel" viewBox="0 0 48 48"><rect x="1" y="1" width="46" height="46" rx="11" fill="#fdfdfd" /><path d="M14 8h27v32H14z" fill="#2f9a5e" /><path d="M28 8h13v10H28z" fill="#50c285" /><path d="M14 28h27v12H14z" fill="#1c6b3f" /><rect x="5" y="14" width="18" height="20" rx="2" fill="#17703e" /><text x="14" y="29" text-anchor="middle" font-family="Inter, sans-serif" font-weight="700" font-size="14" fill="#fff">X</text></symbol>
      <symbol id="d-imagecap" viewBox="0 0 48 48"><rect x="0" y="0" width="48" height="48" rx="5" fill="url(#g-grey)" /><path d="M6 8l16-3 3 17-15 3z" fill="#efe9dc" /><path d="M22 10l20 5-4 22-18-5z" fill="#2c4664" /><path d="M14 20h26v24H14z" fill="#26262a" /><path d="M27 27l2 4h4l-3 3 1 5-4-3-4 3 1-5-3-3h4z" fill="#f0bb3a" /></symbol>
      <symbol id="d-webex" viewBox="0 0 48 48"><circle cx="24" cy="24" r="25" fill="#f5f7f8" /><circle cx="24" cy="24" r="22" fill="#3aa7d8" /><path d="M40 12q8 18-7 30-10 5-18 0 18-1 25-30z" fill="#174a66" /><circle cx="24" cy="24" r="13" fill="#fff" /><path d="M37 18q1 16-13 20 2-12 13-20z" fill="#78bf4f" /></symbol>
      <symbol id="d-viewer" viewBox="0 0 48 48"><rect x="1" y="1" width="46" height="46" rx="11" fill="#0a1252" /><circle cx="24" cy="24" r="18" fill="#fff" /><path d="M8 24l10-8v5h12v-5l10 8-10 8v-5H18v5z" fill="#0a1252" /></symbol>
      <symbol id="d-preview" viewBox="0 0 48 48"><rect x="1" y="1" width="46" height="46" rx="11" fill="#f3f4f6" /><rect x="5" y="5" width="38" height="38" rx="7" fill="#a7c0ee" /><path d="M5 29h38v9q-1 5-6 5H11q-5 0-6-5z" fill="#3f5a8f" /><path d="M5 36h38v2q-1 5-6 5H11q-5 0-6-5z" fill="#d8cfc0" /><rect x="25" y="23" width="20" height="11" rx="3" fill="#1b1b1d" /><path d="M27 34h16l4 14H23z" fill="#d5d9dc" /></symbol>
      <symbol id="d-zoom" viewBox="0 0 48 48"><rect x="1" y="1" width="46" height="46" rx="11" fill="#37383b" /><path d="M12 13h19q3 0 3 4v15q0 4-4 4H13q-4 0-4-4V16q0-3 3-3z" fill="#3c86f0" /><path d="M33 22l9-7v19l-9-6zM9 34l13-10 13 12H13z" fill="#6ac3fb" /></symbol>
      <symbol id="d-folder" viewBox="0 0 56 48"><path d="M1 6q0-4 4-4h12l5 5h29q4 0 4 4v32q0 4-4 4H5q-4 0-4-4z" fill="#4fa6d8" /><path d="M1 12h54v31q0 4-4 4H5q-4 0-4-4z" fill="#71c6f3" /><circle cx="28" cy="27" r="9" fill="#4a9fd2" /><path d="M28 21v11M23 28l5 5 5-5" fill="none" stroke="#71c6f3" stroke-width="2" /></symbol>
      <symbol id="d-win-mail" viewBox="0 0 52 48"><rect y="9" width="52" height="31" fill="#1f2028" /><path d="M0 10h52" stroke="#3a3b42" stroke-width="2" /><use href="#d-mail" x="32" y="32" width="18" height="18" /></symbol>
      <symbol id="d-win-finder" viewBox="0 0 52 48"><rect y="12" width="52" height="27" fill="#1b1c22" /><path d="M2 14h6v20H2z" fill="#3d3f47" /><path d="M13 15h5v5h-5z" fill="#e9793a" /><path d="M24 15h5v5h-5z" fill="#4a96d8" /><use href="#d-finder" x="32" y="31" width="18" height="18" /></symbol>
      <symbol id="d-win-text" viewBox="0 0 52 48"><rect y="7" width="52" height="35" fill="#25272e" /><path d="M12 13h26M14 19h24M14 25h20M14 31h22" stroke="#5e636e" stroke-width="2" /><path d="M8 18h3v3H8zM8 24h3v3H8z" fill="#2f6fd0" /><use href="#d-keynote" x="33" y="31" width="18" height="18" /></symbol>
      <symbol id="d-win-excel" viewBox="0 0 52 48"><rect y="8" width="52" height="32" fill="#f2f3f5" /><path d="M0 8h52v5H0z" fill="#2b2b2c" /><path d="M2 17h30v4H2z" fill="#b7c8ec" /><path d="M2 28h30M2 33h30" stroke="#d6d9de" stroke-width="1" /><use href="#d-excel" x="32" y="31" width="18" height="18" /></symbol>
      <symbol id="d-win-word" viewBox="0 0 52 48"><rect y="9" width="52" height="30" fill="#242424" /><path d="M0 11h52M0 15h52" stroke="#484848" stroke-width="2" stroke-dasharray="5 2" /><path d="M4 26h14" stroke="#8f8f8f" stroke-width="2" /><path d="M2 34h32v5H2z" fill="#e9e9e9" /><use href="#d-word" x="32" y="31" width="18" height="18" /></symbol>
      <symbol id="d-trash" viewBox="0 0 48 48"><path d="M6 5h36l-4 40q-14 6-28 0z" fill="#74787c" /><path d="M12 10l3 34M20 10l1 36M28 10l-1 36M36 10l-3 34" stroke="#94989c" stroke-width="2" /><path d="M5 6l6-8 6 4 8-5 6 5 7-3 5 8q-18 6-38-1z" fill="#e3e4e4" /><path d="M14 2l4 3M30 1l-3 5" stroke="#4e7dc0" stroke-width="2" /></symbol>

      <!-- homework player -->
      <symbol id="help" viewBox="0 0 24 24"><circle cx="12" cy="12" r="11" fill="none" stroke="#555a66" stroke-width="2" /><path d="M9 10q0-4 3-4t3 3q0 2-3 4v2M12 17v2" fill="none" stroke="#555a66" stroke-width="2" /></symbol>
      <symbol id="menu" viewBox="0 0 20 18"><path d="M1 2h18M1 9h18M1 16h18" stroke="#fff" stroke-width="2" /></symbol>
      <symbol id="gear" viewBox="0 0 24 24"><path fill="none" stroke="#fff" stroke-width="2" d="M10.300 4.300c.4-1.800 2.900-1.800 3.400 0a1.700 1.700 0 0 0 2.600 1.100c1.500-.9 3.300.8 2.400 2.400a1.700 1.700 0 0 0 1 2.500c1.800.5 1.800 3 0 3.400a1.700 1.700 0 0 0-1 2.600c.9 1.500-.9 3.300-2.400 2.400a1.700 1.700 0 0 0-2.600 1c-.5 1.800-3 1.800-3.400 0a1.700 1.700 0 0 0-2.600-1c-1.500.9-3.300-.9-2.400-2.400a1.700 1.700 0 0 0-1-2.600c-1.800-.4-1.800-2.900 0-3.400a1.700 1.700 0 0 0 1-2.500c-.9-1.600.9-3.300 2.400-2.400 1 .6 2.300.1 2.600-1.100z" /><circle cx="12" cy="12" r="3" fill="none" stroke="#fff" stroke-width="2" /></symbol>
      <symbol id="collapse" viewBox="0 0 30 26"><path d="M2 0v26M29 13H8M19 2L8 13l11 11" fill="none" stroke="#6b6f73" stroke-width="2" /></symbol>
      <symbol id="todo" viewBox="0 0 24 24"><circle cx="12" cy="12" r="10" fill="none" stroke="#5a6270" stroke-width="3" /></symbol>
      <symbol id="done" viewBox="0 0 24 24"><circle cx="12" cy="12" r="12" fill="#2d7d3a" /><path d="M6 12l4 5 8-10" fill="none" stroke="#fff" stroke-width="3" /></symbol>
      <symbol id="prev" viewBox="0 0 12 12"><path d="M8 2L4 6l4 4" fill="none" stroke="#fff" stroke-width="2" /></symbol>
      <symbol id="next" viewBox="0 0 12 12"><path d="M4 2l4 4-4 4" fill="none" stroke="#fff" stroke-width="2" /></symbol>
      <symbol id="low-battery" viewBox="0 0 40 60"><rect x="9" y="7" width="29" height="51" rx="5" fill="none" stroke="#808084" stroke-width="2" /><path d="M19 5q0-4 5-4t4 4z" fill="#808084" /><path d="M12 48h23v5q0 3-3 3H15q-3 0-3-3z" fill="#ef5a45" /><path d="M0 48l5 4-5 4z" fill="#ddd" /></symbol>
    </svg>

    <div class="screen">
      <header class="menubar" data-clock="Sat Jun 17&nbsp; 7:34 PM" data-battery="battery"></header>

      <div class="window">
        <div class="chrome">
          <canvas class="stars"></canvas>
          <svg class="lb"><use href="#lb" /></svg>
          <div class="tabs">
            <span class="lights"><i></i><i></i><i></i></span>
            <button class="tab"><svg><use href="#fav-pencil" /></svg><span>Blackboard Learn</span><svg class="x"><use href="#close" /></svg></button>
            <button class="tab divided"><svg><use href="#fav-globe" /></svg><span>Pearson MyLab and Mastering</span><svg class="x"><use href="#close" /></svg></button>
            <button class="tab active"><svg><use href="#fav-hero" /></svg><span>Course Hero</span><svg class="x"><use href="#close" /></svg></button>
            <button class="round" aria-label="New tab"><svg><use href="#plus" /></svg></button>
            <button class="round last" aria-label="Search tabs"><svg><use href="#chevron" /></svg></button>
          </div>
          <div class="toolbar">
            <svg><use href="#back" /></svg>
            <svg><use href="#forward" /></svg>
            <svg><use href="#reload" /></svg>
            <div class="omnibox">
              <svg class="lock"><use href="#lock" /></svg>
              <label for="url-main">coursehero.com</label>
              <input id="url-main" type="text" value="/qa/wait/51893056/?question_id=51893056" />
              <svg><use href="#install" /></svg>
              <svg><use href="#share" /></svg>
              <svg><use href="#star" /></svg>
            </div>
            <svg><use href="#react" /></svg>
            <svg><use href="#ext-loop" /></svg>
            <svg><use href="#ext-layout" /></svg>
            <svg><use href="#ext-g" /></svg>
            <svg><use href="#puzzle" /></svg>
            <svg><use href="#sidepanel" /></svg>
            <span class="avatar">W</span>
            <button class="update">Update <i></i></button>
          </div>
          <nav class="bookmarks"></nav>
        </div>

        <main class="page">
          <div class="column">
            <section class="shot tail">
              <div class="tail-end"></div>
              <div class="labels"></div>
              <div class="dock" data-mail="62,190"></div>
            </section>

            <section class="shot">
              <div class="menubar" data-clock="Sat Jun 17&nbsp; 2:04 PM" data-battery="battery-low"></div>
              <div class="chrome">
                <canvas class="stars"></canvas>
                <svg class="lb"><use href="#lb" /></svg>
                <div class="tabs">
                  <span class="lights"><i></i><i></i><i></i></span>
                  <button class="tab"><svg><use href="#fav-pencil" /></svg><span>Content</span><svg class="x"><use href="#close" /></svg></button>
                  <button class="tab divided"><svg><use href="#fav-globe" /></svg><span>Pearson MyLab and Mastering</span><svg class="x"><use href="#close" /></svg></button>
                  <button class="tab active"><svg><use href="#fav-pearson" /></svg><span>Do Homework - 2.5 Homework</span><svg class="x"><use href="#close" /></svg></button>
                  <button class="tab"><svg><use href="#fav-hero" /></svg><span>Course Hero</span><svg class="x"><use href="#close" /></svg></button>
                  <button class="tab divided"><svg><use href="#fav-chegg" /></svg><span>Expert Q&amp;A | Chegg.com</span><svg class="x"><use href="#close" /></svg></button>
                  <button class="round" aria-label="New tab"><svg><use href="#plus" /></svg></button>
                  <button class="round last" aria-label="Search tabs"><svg><use href="#chevron" /></svg></button>
                </div>
                <div class="toolbar">
                  <svg><use href="#back" /></svg>
                  <svg><use href="#forward" /></svg>
                  <svg><use href="#reload" /></svg>
                  <div class="omnibox">
                    <svg class="lock"><use href="#lock" /></svg>
                    <label for="url-one">mylab.pearson.com</label>
                    <input id="url-one" type="text" value="/Student/PlayerHomework.aspx?homeworkId=651657192&amp;questionId=3&amp;flushed=true&amp;cId=7436142&amp;back=https://mylab.pearson.com/Student/D..." />
                    <svg><use href="#share" /></svg>
                    <svg><use href="#star" /></svg>
                  </div>
                  <svg><use href="#react-off" /></svg>
                  <svg><use href="#ext-loop" /></svg>
                  <svg><use href="#ext-layout" /></svg>
                  <svg><use href="#ext-g" /></svg>
                  <svg><use href="#puzzle" /></svg>
                  <svg><use href="#playlist" /></svg>
                  <svg><use href="#sidepanel" /></svg>
                  <span class="avatar"></span>
                  <button class="update" aria-label="Update"></button>
                </div>
                <nav class="bookmarks"></nav>
                <div class="notice">
                  <svg><use href="#low-battery" /></svg>
                  <p><strong>Low Battery</strong><br />Your Mac will sleep soon unless plugged<br />into a power outlet.</p>
                </div>
              </div>

              <div class="course">
                <strong>Calculus I (64181)</strong>
                <span>Alma Smith</span>
                <span>06/17/23 2:04 PM</span>
                <svg><use href="#help" /></svg>
              </div>

              <div class="hw-bar">
                <svg class="burger"><use href="#menu" /></svg>
                <h2>Homework:&nbsp; <b>2.5 Homework</b></h2>
                <div class="pager">
                  <button aria-label="Previous"><svg><use href="#prev" /></svg></button>
                  <p><b>Question 3, 2.5.37</b><small>Part 1 of 3</small></p>
                  <button aria-label="Next"><svg><use href="#next" /></svg></button>
                </div>
                <div class="score">
                  <p><b>HW Score:</b> 17.39%, 4 of 23 points</p>
                  <p><i></i><b>Points:</b> 0 of 1</p>
                </div>
                <svg class="gear"><use href="#gear" /></svg>
                <button class="save">Save</button>
              </div>

              <div class="player">
                <aside class="questions">
                  <div class="questions-head"><h3>Question list</h3><svg><use href="#collapse" /></svg></div>
                  <a href="#"><svg><use href="#done" /></svg>Question 1</a>
                  <a href="#"><svg><use href="#done" /></svg>Question 2</a>
                  <a href="#" class="current"><svg><use href="#todo" /></svg>Question 3</a>
                  <a href="#"><svg><use href="#todo" /></svg>Question 4</a>
                  <a href="#"><svg><use href="#todo" /></svg>Question 5</a>
                  <a href="#"><svg><use href="#done" /></svg>Question 6</a>
                  <a href="#"><svg><use href="#todo" /></svg>Question 7</a>
                  <a href="#"><svg><use href="#todo" /></svg>Question 8</a>
                  <a href="#"><svg><use href="#todo" /></svg>Question 9</a>
                  <a href="#"><svg><use href="#todo" /></svg>Question 10</a>
                </aside>

                <div class="exercise">
                  <div class="sentence">Determine <span class="lim">lim<sub>x→∞</sub></span> f(x) and <span class="lim">lim<sub>x→ − ∞</sub></span> f(x) for the following function. Then give the horizontal asymptotes of f, if any.</div>
                  <div class="formula">f(x) = <span class="frac"><span>7x</span><span>14x + 2</span></span></div>
                  <div class="splitter"><button aria-label="Resize">•••</button></div>
                  <div class="sentence">Evaluate <span class="lim">lim<sub>x→∞</sub></span> f(x). Select the correct choice below and, if necessary, fill in the answer box to complete your choice.</div>
                  <div class="choice">
                    <input type="radio" name="answer" id="choice-a" />
                    <label for="choice-a">A.</label>
                    <div class="equation"><span class="lim">lim<sub>x→∞</sub></span><span class="frac"><span>7x</span><span>14x + 2</span></span>=<input type="text" aria-label="Answer" /><em>(Simplify your answer.)</em></div>
                  </div>
                  <div class="choice">
                    <input type="radio" name="answer" id="choice-b" />
                    <label for="choice-b">B.</label>
                    <p>The limit does not exist and is neither ∞ nor &nbsp;− ∞.</p>
                  </div>
                </div>
              </div>

              <div class="actions">
                <button class="plain">Help me solve this</button>
                <button class="plain">View an example</button>
                <button class="plain">Get more help <small>▲</small></button>
                <button class="clear">Clear all</button>
                <button class="check">Check answer</button>
              </div>
              <div class="labels"></div>
              <div class="dock" data-mail="62,190"></div>
            </section>

            <section class="shot">
              <div class="menubar" data-clock="Sat Jun 17&nbsp; 2:30 PM" data-battery="battery-charging"></div>
              <div class="chrome">
                <canvas class="stars"></canvas>
                <svg class="lb"><use href="#lb" /></svg>
                <div class="tabs">
                  <span class="lights"><i></i><i></i><i></i></span>
                  <button class="tab"><svg><use href="#fav-pencil" /></svg><span>Content</span><svg class="x"><use href="#close" /></svg></button>
                  <button class="tab divided"><svg><use href="#fav-globe" /></svg><span>Pearson MyLab and Mastering</span><svg class="x"><use href="#close" /></svg></button>
                  <button class="tab active"><svg><use href="#fav-pearson" /></svg><span>Do Homework - 2.6 Homework</span><svg class="x"><use href="#close" /></svg></button>
                  <button class="tab"><svg><use href="#fav-hero" /></svg><span>Course Hero</span><svg class="x"><use href="#close" /></svg></button>
                  <button class="round" aria-label="New tab"><svg><use href="#plus" /></svg></button>
                  <button class="round last" aria-label="Search tabs"><svg><use href="#chevron" /></svg></button>
                </div>
                <div class="toolbar">
                  <svg><use href="#back" /></svg>
                  <svg><use href="#forward" /></svg>
                  <svg><use href="#reload" /></svg>
                  <div class="omnibox">
                    <svg class="lock"><use href="#lock" /></svg>
                    <label for="url-two">mylab.pearson.com</label>
                    <input id="url-two" type="text" value="/Student/PlayerHomework.aspx?homeworkId=651657193&amp;questionId=1&amp;flushed=false&amp;cId=7436142&amp;back=https://mylab.pearson.com/Student/D..." />
                    <svg><use href="#share" /></svg>
                    <svg><use href="#star" /></svg>
                  </div>
                  <svg><use href="#react-off" /></svg>
                  <svg><use href="#ext-loop" /></svg>
                  <svg><use href="#ext-layout" /></svg>
                  <svg><use href="#ext-g" /></svg>
                  <svg><use href="#puzzle" /></svg>
                  <svg><use href="#playlist" /></svg>
                  <svg><use href="#sidepanel" /></svg>
                  <span class="avatar">W</span>
                  <button class="update">Update <i></i></button>
                </div>
                <nav class="bookmarks"></nav>
              </div>
              <div class="course">
                <strong>Calculus I (64181)</strong>
                <span>Alma Smith</span>
                <span>06/17/23 2:30 PM</span>
                <svg><use href="#help" /></svg>
              </div>
              <div class="hw-bar"></div>
            </section>
          </div>
        </main>
      </div>

      <div class="labels"></div>
      <div class="dock" data-mail="62,211"></div>
    </div>

    <script src="script.js"></script>
  </body>
</html>
```
FILE: styles.css
```css
* {
  box-sizing: border-box;
}
body {
  margin: 0;
  font-family: Inter, "Open Sans", sans-serif;
  background-color: #5a6f8e;
}
button {
  font: inherit;
  color: inherit;
  border: none;
  background: none;
  padding: 0;
}
input {
  font: inherit;
  outline: none;
}
p,
h2,
h3 {
  margin: 0;
}
svg {
  flex: none;
}
.sprite {
  position: absolute;
  width: 0;
  height: 0;
  visibility: hidden;
}

/* full size desktop */
.screen {
  --menu-h: 50px;
  --menu-fs: 26px;
  --menu-gap: 40px;
  --menu-pad: 36px;
  --icon: 32px;
  --status-gap: 40px;
  --tab-top: 18px;
  --tab-h: 68px;
  --tab-w: 478px;
  --tab-r: 16px;
  --tab-pad: 23px;
  --fs: 24px;
  --gap: 16px;
  --x: 20px;
  --light: 24px;
  --lights-left: 42px;
  --lights-right: 40px;
  --round: 56px;
  --round-gap: 19px;
  --tool-top: 8px;
  --tool-h: 56px;
  --tool-pad: 28px;
  --tool-gap: 32px;
  --url-fs: 28px;
  --lock-gap: -12px;
  --avatar: 44px;
  --avatar-gap: -17px;
  --update-w: 174px;
  --bm-h: 72px;
  --bm-gap: 30px;
  --line: 2px;
  --dock-side: 44px;
  --dock-h: 80px;
  --dock-bottom: 10px;
  --dock-icon: 48px;
  --dock-pad: 12px;
  --dock-r: 24px;
  --dot: 6px;
  --sep: 6px;
  --badge-fs: 14px;
  --badge-h: 22px;
  --labels-h: 8px;
  --labels-fs: 28px;
  --labels-w: 240px;
  display: flex;
  flex-direction: column;
  height: 100vh;
  overflow: hidden;
  background: linear-gradient(90deg, #5878a8, #55687f 12%, #6d7682 55%, #5d6a77 85%, #77747e);
}
/* smaller copies inside the page */
.shot {
  --menu-h: 32px;
  --menu-fs: 16px;
  --menu-gap: 27px;
  --menu-pad: 23px;
  --icon: 20px;
  --status-gap: 26px;
  --tab-top: 11px;
  --tab-h: 43px;
  --tab-w: 303px;
  --tab-r: 10px;
  --tab-pad: 15px;
  --fs: 15px;
  --gap: 10px;
  --x: 13px;
  --light: 15px;
  --lights-left: 27px;
  --lights-right: 26px;
  --round: 36px;
  --round-gap: 11px;
  --tool-top: 5px;
  --tool-h: 36px;
  --tool-pad: 18px;
  --tool-gap: 20px;
  --url-fs: 18px;
  --lock-gap: -7px;
  --avatar: 28px;
  --avatar-gap: -10px;
  --update-w: 111px;
  --bm-h: 46px;
  --bm-gap: 22px;
  --line: 1px;
  --dock-side: 28px;
  --dock-h: 50px;
  --dock-bottom: 7px;
  --dock-icon: 31px;
  --dock-pad: 8px;
  --dock-r: 15px;
  --dot: 4px;
  --sep: 4px;
  --badge-fs: 9px;
  --badge-h: 14px;
  --labels-h: 5px;
  --labels-fs: 18px;
  --labels-w: 152px;
  display: flow-root;
  background: linear-gradient(90deg, #5878a8, #55687f 12%, #6d7682 55%, #5d6a77 85%, #77747e);
  margin-bottom: 28px;
}

/* menu bar */
.menubar {
  display: flex;
  align-items: center;
  gap: var(--menu-gap);
  height: var(--menu-h);
  padding: 0 var(--menu-pad);
  font-size: var(--menu-fs);
  line-height: 1;
  color: #e8e8ea;
  background: linear-gradient(90deg, #030407, #04071a);
  flex: none;
  white-space: nowrap;
}
.menubar > svg {
  width: var(--icon);
  height: var(--icon);
}
.menubar button:first-of-type {
  font-weight: 700;
}
.status {
  display: flex;
  align-items: center;
  gap: var(--status-gap);
  margin-left: auto;
}
.status svg {
  height: var(--icon);
}

/* browser window */
.window {
  display: flex;
  flex-direction: column;
  flex: 1;
  min-height: 0;
  overflow: hidden;
  border-radius: 22px;
  background: #f8f9fb;
  box-shadow: 0 0 0 1px #000, 0 6px 26px #000;
  position: relative;
}
.window::after {
  content: "";
  position: absolute;
  left: 0;
  right: 0;
  bottom: 0;
  height: 90px;
  background: linear-gradient(rgb(0, 0, 0, 0), rgb(0, 0, 0, 0.08));
  mask-image: linear-gradient(90deg, transparent, #000 5%, #000 95%, transparent);
  pointer-events: none;
}
.chrome {
  position: relative;
  color: #fff;
  background: #020204;
  border-bottom: var(--line) solid #43454b;
  border-radius: var(--tab-r) var(--tab-r) 0 0;
  box-shadow: inset 0 var(--line) #5f5f60;
  flex: none;
}
.stars {
  position: absolute;
  top: 0;
  left: 0;
  width: 100%;
  height: 100%;
}
.lb {
  position: absolute;
  left: 4px;
  top: 5px;
  width: calc(var(--icon) * 2);
  height: calc(var(--icon) / 2);
}
.tabs,
.toolbar,
.bookmarks {
  position: relative;
  display: flex;
  align-items: center;
}
.tabs {
  padding-top: var(--tab-top);
}
.lights {
  display: flex;
  gap: var(--gap);
  margin: 0 var(--lights-right) var(--gap) var(--lights-left);
}
.lights i {
  width: var(--light);
  height: var(--light);
  border-radius: 50%;
  background: #ec6a5e;
}
.lights i:nth-child(2) {
  background: #f4bf4f;
}
.lights i:nth-child(3) {
  background: #61c454;
}
.tab {
  display: flex;
  align-items: center;
  gap: var(--gap);
  width: var(--tab-w);
  height: var(--tab-h);
  padding: 0 var(--x) 0 var(--tab-pad);
  border-radius: var(--tab-r);
  background: rgb(180, 180, 180, 0.9);
  font-size: var(--fs);
  white-space: nowrap;
  text-align: left;
}
.tab span {
  flex: 1;
}
.tab svg {
  width: var(--icon);
  height: var(--icon);
}
.tab .x {
  width: var(--x);
  height: var(--x);
}
.tab.active {
  background: none;
}
.tab.divided {
  background: linear-gradient(#fff, #fff) left / 1px 70% no-repeat, rgb(180, 180, 180, 0.9);
}
.round {
  display: flex;
  align-items: center;
  justify-content: center;
  width: var(--round);
  height: var(--round);
  margin-left: var(--round-gap);
  border-radius: 50%;
  background: rgb(180, 180, 180, 0.9);
}
.round.last {
  margin-left: auto;
  margin-right: var(--gap);
}
.round svg {
  width: calc(var(--round) / 2);
  height: calc(var(--round) / 2);
}
.toolbar {
  gap: var(--tool-gap);
  margin-top: var(--tool-top);
  padding: 0 var(--gap) 0 var(--tool-pad);
}
.toolbar svg {
  width: var(--icon);
  height: var(--icon);
}
.omnibox {
  display: flex;
  align-items: center;
  gap: var(--tool-gap);
  flex: 1;
  min-width: 0;
  height: var(--tool-h);
  padding: 0 var(--x) 0 var(--tool-pad);
  border-radius: var(--tool-h);
  background: #22252c;
  font-size: var(--url-fs);
}
.omnibox .lock {
  width: var(--gap);
  height: var(--x);
  margin-right: var(--lock-gap);
}
.omnibox input {
  flex: 1;
  min-width: 0;
  margin: 0 -16px 0 calc(var(--tool-gap) * -1);
  padding: 0;
  border: none;
  background: none;
  color: #97999d;
}
.avatar {
  display: flex;
  align-items: center;
  justify-content: center;
  width: var(--avatar);
  height: var(--avatar);
  margin: 0 var(--avatar-gap) 0 -5px;
  border-radius: 50%;
  background: #1d4f43;
  font-size: var(--fs);
}
.update {
  display: flex;
  align-items: center;
  justify-content: space-between;
  width: var(--update-w);
  height: var(--tool-h);
  padding: 0 var(--x) 0 var(--tab-pad);
  border: var(--line) solid #e58f84;
  border-radius: var(--tool-h);
  background: #151114;
  color: #e58f84;
  font-size: var(--menu-fs);
}
.update i {
  width: var(--dot);
  height: var(--dot);
  border-radius: 50%;
  background: #e58f84;
  box-shadow: 0 10px #e58f84, 0 -10px #e58f84;
}
.shot .update i {
  box-shadow: 0 6px #e58f84, 0 -6px #e58f84;
}
.bookmarks {
  gap: var(--bm-gap);
  height: var(--bm-h);
  padding: 0 var(--x) 0 var(--tool-pad);
  font-size: var(--fs);
  white-space: nowrap;
}
.bookmarks a {
  display: flex;
  align-items: center;
  gap: var(--gap);
  color: #fff;
  text-decoration: none;
}
.bookmarks svg {
  width: var(--icon);
  height: var(--icon);
}
.bookmarks .dim {
  color: #25282d;
}
.bookmarks .more {
  margin-left: auto;
}
.bookmarks .other {
  border-left: var(--line) solid #44464b;
  padding-left: var(--x);
  margin-left: calc(var(--gap) * -1);
}

/* course hero page */
.page {
  flex: 1;
  min-height: 0;
  overflow: hidden;
}
.column {
  max-width: 2232px;
  margin: 0 auto;
  padding: 0 48px;
  background: #fff;
  border: solid #dcdfe5;
  border-width: 0 2px;
}
.tail-end {
  height: 23px;
  border-radius: 0 0 14px 14px;
  background: linear-gradient(90deg, #fff, transparent 4%, transparent 96%, #fff), linear-gradient(#f3f3f3, #e6e6e6);
}

/* desktop file names peeking out above the dock */
.labels {
  display: flex;
  align-items: flex-end;
  height: var(--labels-h);
  padding-left: 13%;
  overflow: hidden;
  font-size: var(--labels-fs);
  line-height: 0.7;
  color: #8b8b8b;
  background: linear-gradient(90deg, transparent, #2b323c 6%, #33363b 60%, #2a3440 94%, transparent);
  flex: none;
}
.labels span {
  width: var(--labels-w);
  text-align: center;
  white-space: nowrap;
  flex: none;
}
.labels .dark {
  width: 14%;
  height: 100%;
  margin-left: 1%;
  background: #08080a;
}
.dock {
  display: flex;
  justify-content: space-between;
  height: var(--dock-h);
  margin: 0 var(--dock-side) var(--dock-bottom);
  padding: var(--dock-pad) var(--dock-pad) 0;
  border: var(--line) solid #70757f;
  border-radius: var(--dock-r);
  background: linear-gradient(90deg, #3a4d6c, #42506a 20%, #53555f 38%, #474f5a 62%, #3f4e5f 82%, #575760);
  box-shadow: 0 0 0 1px #23272e;
  flex: none;
}
.app {
  position: relative;
  width: var(--dock-icon);
  height: var(--dock-icon);
  margin-top: -1px;
}
.app svg {
  width: 100%;
  height: 100%;
  overflow: visible;
}
.app.running::after {
  content: "";
  position: absolute;
  left: calc(50% - var(--dot) / 2);
  top: calc(100% + var(--dot) + var(--line) + 1px);
  width: var(--dot);
  height: var(--dot);
  border-radius: 50%;
  background: #cdd5e2;
}
.badge {
  position: absolute;
  right: calc(var(--dot) * -1);
  top: calc(var(--dot) * -1);
  padding: 0 3px;
  border-radius: var(--badge-h);
  background: #e2463b;
  color: #fff;
  font-size: var(--badge-fs);
  line-height: var(--badge-h);
}
.dock hr {
  width: var(--line);
  height: 84%;
  margin: 0 var(--sep);
  border: none;
  background: #7f848d;
}

/* battery notification */
.notice {
  position: absolute;
  top: 20px;
  right: 20px;
  display: flex;
  align-items: center;
  gap: 18px;
  width: 436px;
  height: 90px;
  padding-left: 18px;
  border: 1px solid #55555a;
  border-radius: 15px;
  background: #27272b;
  color: #e9e9ea;
  font-size: 16px;
  line-height: 21px;
}
.notice svg {
  width: 40px;
  height: 60px;
}
.notice strong {
  font-weight: 600;
}

/* homework player */
.course {
  display: flex;
  align-items: center;
  gap: 27px;
  height: 64px;
  padding: 0 37px 0 25px;
  background: #fff;
  color: #101a3a;
  font-family: "Open Sans", sans-serif;
  font-size: 18px;
}
.course strong {
  font-weight: 600;
  margin-right: auto;
}
.course svg {
  width: 24px;
  height: 24px;
}
.hw-bar,
.player,
.actions {
  font-family: "Liberation Sans", Arial, sans-serif;
}
.hw-bar {
  display: flex;
  align-items: center;
  height: 86px;
  padding: 2px 25px 0 18px;
  border-top: 1px solid #9bbecc;
  border-bottom: 1px solid #d5dde6;
  background: #2f7795;
  color: #fff;
}
.burger {
  width: 20px;
  height: 18px;
}
.hw-bar h2 {
  flex: 1;
  padding-left: 25px;
  font-size: 23px;
  font-weight: 400;
}
.pager {
  display: flex;
  align-items: center;
  gap: 13px;
}
.pager button {
  display: flex;
  align-items: center;
  justify-content: center;
  width: 40px;
  height: 40px;
  border-radius: 50%;
  background: #285f79;
}
.pager button svg {
  width: 14px;
  height: 14px;
}
.pager p {
  display: flex;
  flex-direction: column;
  align-items: center;
  gap: 2px;
  font-size: 20px;
}
.pager small {
  font-size: 15px;
}
.score {
  width: 35%;
  padding-left: 226px;
  font-size: 18px;
  line-height: 23px;
}
.score p {
  display: flex;
  align-items: center;
  gap: 5px;
}
.score i {
  width: 20px;
  height: 20px;
  margin-right: 8px;
  border: 2px solid #fff;
  border-radius: 50%;
}
.gear {
  width: 30px;
  height: 30px;
  margin-right: 45px;
}
.save {
  width: 98px;
  height: 45px;
  border-radius: 23px;
  background: #213546;
  font-size: 20px;
  font-weight: 700;
}
.player {
  display: flex;
  height: 857px;
  overflow: hidden;
  background: #fff;
}
.questions {
  width: 343px;
  border-right: 2px solid #d6dbe6;
  font-size: 20px;
  flex: none;
}
.questions-head {
  display: flex;
  align-items: center;
  justify-content: space-between;
  height: 83px;
  padding: 0 12px;
}
.questions-head h3 {
  font-size: 32px;
  font-weight: 400;
  color: #444;
}
.questions-head svg {
  width: 30px;
  height: 26px;
}
.questions a {
  display: flex;
  align-items: center;
  gap: 14px;
  height: 81px;
  padding-left: 18px;
  color: #2a7490;
  text-decoration: none;
}
.questions a svg {
  width: 24px;
  height: 24px;
}
.questions .current {
  padding-left: 13px;
  border-left: 5px solid #205d76;
  background: #f7eac3;
}
.exercise {
  flex: 1;
  padding: 14px 12px 0 12px;
  font-size: 16px;
  line-height: 20px;
  color: #000;
}
.sentence {
  height: 40px;
  padding-left: 8px;
}
.lim {
  display: inline-flex;
  flex-direction: column;
  align-items: center;
  vertical-align: top;
}
.lim sub {
  font-family: "DejaVu Sans", sans-serif;
  font-size: 13px;
  line-height: 20px;
  vertical-align: baseline;
}
.formula {
  display: flex;
  align-items: center;
  gap: 5px;
  margin-top: 18px;
  padding-left: 38px;
}
.frac {
  display: inline-flex;
  flex-direction: column;
  text-align: center;
  line-height: 23px;
}
.frac span:first-child {
  border-bottom: 2px solid #222;
}
.splitter {
  display: flex;
  align-items: center;
  margin-top: 28px;
}
.splitter::before,
.splitter::after {
  content: "";
  flex: 24;
  height: 3px;
  background: #98a1b2;
}
.splitter::after {
  flex: 25;
}
.splitter button {
  display: flex;
  align-items: center;
  justify-content: center;
  width: 42px;
  height: 12px;
  border: 2px solid #6f7a8c;
  border-radius: 6px;
  background: #f3f5f8;
  color: #444;
  font-size: 12px;
  line-height: 8px;
}
.splitter + .sentence {
  margin: 31px 0 30px;
}
.choice {
  display: flex;
  align-items: flex-start;
  gap: 7px;
  padding-left: 9px;
  margin-bottom: 13px;
}
.choice input[type="radio"] {
  appearance: none;
  width: 18px;
  height: 18px;
  margin: 1px 0 0;
  border: 2px solid #98a4e2;
  border-radius: 50%;
  background: #fff;
}
.choice > label {
  width: 23px;
  font-weight: 700;
  color: #4257bd;
}
.equation {
  display: flex;
  align-items: center;
  gap: 5px;
}
.equation .lim {
  padding-top: 16px;
  margin-right: -4px;
}
.equation input {
  width: 22px;
  height: 26px;
  margin: 0 1px;
  padding: 0;
  border: 2px solid #abbbe0;
  background: #dcdcdc;
}
.equation em {
  font-style: normal;
  color: #10108a;
}
.actions {
  display: flex;
  align-items: center;
  gap: 40px;
  height: 88px;
  padding: 0 22px 0 36px;
  border-radius: 0 0 14px 14px;
  background: linear-gradient(#f1f1f1, #f8f8f8 60%, #e8e8e8);
  font-size: 20px;
  font-weight: 700;
}
.actions .plain {
  color: #000;
}
.actions small {
  font-size: 12px;
}
.clear {
  margin-left: auto;
  width: 122px;
  height: 41px;
  border: 2px solid #7b8290;
  border-radius: 21px;
  background: #fbfbfb;
  color: #7b8290;
}
.check {
  width: 169px;
  height: 41px;
  margin-left: 18px;
  border-radius: 21px;
  background: linear-gradient(120deg, #efbdb2, #e9a9bc 50%, #dfa7cc);
  color: #fff;
}
```
FILE: script.js
```js
const icon = (id, attrs = "") => `<svg ${attrs}><use href="#${id}"></use></svg>`;

// menu bars
const menus = ["Chrome", "File", "Edit", "View", "History", "Bookmarks", "Profiles", "Tab", "Window", "Help"];
// natural width of every status glyph on a 32px tall line
const status = [
  ["grammarly", 32], ["camera", 42], ["viewer", 34], ["ring", 32], ["moon", 28], ["keyboard", 44],
  ["volume", 38], ["bluetooth", 24], ["battery", 50], ["wifi", 34], ["search", 26], ["control", 47], ["siri", 28],
];

document.querySelectorAll(".menubar").forEach((bar) => {
  const items = menus.map((name) => `<button>${name}</button>`).join("");
  const glyphs = status
    .map(([name, width]) => icon("st-" + (name === "battery" ? bar.dataset.battery : name), `viewBox="0 0 ${width} 32"`))
    .join("");
  bar.innerHTML = icon("apple") + items + `<div class="status">${glyphs}<span>${bar.dataset.clock}</span></div>`;
});

// bookmark bars
const bookmarks = [
  ["photo", "React + Redux - U..."],
  ["github", "React create-a-lo...", "dim"],
  ["youtube", "Recipe App Using..."],
  ["grammarly", "Grammarly Editor..."],
  ["eduonix", "Eduonix | Success"],
  ["youtube", "AWS S3 with Nod..."],
  ["node", "Nodejs Example t..."],
  ["github", "keithweaver/pytho..."],
  ["heroku", "Direct to S3 File U..."],
];

document.querySelectorAll(".bookmarks").forEach((nav) => {
  nav.innerHTML =
    bookmarks.map(([id, text, cls]) => `<a href="#">${icon("bm-" + id, `class="${cls || ""}"`)}${text}</a>`).join("") +
    `<span class="more">»</span><a href="#" class="other">${icon("bm-folder")}Other Bookmarks</a>`;
});

// docks, "|" is a separator and "*" marks a running app
const apps =
  "finder* siri launchpad chrome* safari* mail* gmail contacts calendar notes freeform reminders maps photos " +
  "messages facetime pages numbers keynote* music podcasts tv news books appstore settings slack postgres atom " +
  "unknown archive vbox terminal unknown android xcode word* | imagecap* webex* excel* viewer* preview* zoom* | " +
  "folder win-mail win-finder win-text win-excel win-word win-word trash";

document.querySelectorAll(".dock").forEach((dock) => {
  const badges = { mail: dock.dataset.mail, settings: "2" };
  dock.innerHTML = apps
    .split(" ")
    .map((app) => {
      if (app === "|") return "<hr />";
      const name = app.replace("*", "");
      const badge = badges[name] ? `<span class="badge">${badges[name]}</span>` : "";
      return `<div class="app ${app.endsWith("*") ? "running" : ""}">${icon("d-" + name)}${badge}</div>`;
    })
    .join("");
});

document.querySelectorAll(".labels").forEach((row) => {
  const names = ["waleed_graduatio", "Canon IJ Scan", "codecanyon-UVDD", "untitled folder", "Screenshot_16047", "", "clothyclothy-", "Screenshot_16047"];
  row.innerHTML = names.map((name) => `<span>${name}</span>`).join("") + '<span class="dark"></span>';
});

// night sky behind the tabs
function drawStars(canvas) {
  const w = (canvas.width = canvas.clientWidth);
  const h = (canvas.height = canvas.clientHeight);
  const ctx = canvas.getContext("2d");
  let seed = 7;
  const rnd = () => (seed = (seed * 16807) % 2147483647) / 2147483647;

  const glow = ctx.createRadialGradient(w * 0.55, h * 0.35, 0, w * 0.55, h * 0.35, w * 0.1);
  glow.addColorStop(0, "rgba(70, 62, 92, 0.5)");
  glow.addColorStop(1, "rgba(20, 20, 50, 0)");
  ctx.fillStyle = glow;
  ctx.fillRect(0, 0, w, h * 0.66);

  const size = w / 3360;
  for (let i = 0; i < 34000; i++) {
    const x = rnd();
    const y = rnd();
    const density = 0.12 + Math.exp(-Math.pow((x - 0.57) / 0.16, 2)) * 0.88;
    if (rnd() > density) continue;
    const fade = y < 0.66 ? 1 : 0.25;
    const light = Math.pow(rnd(), 2) * fade;
    const r = (rnd() > 0.92 ? 4 : 2) * size;
    ctx.fillStyle = `rgba(225, 225, 250, ${light})`;
    ctx.fillRect(x * w, y * h, r, r);
  }
}
document.querySelectorAll(".stars").forEach(drawStars);
```
